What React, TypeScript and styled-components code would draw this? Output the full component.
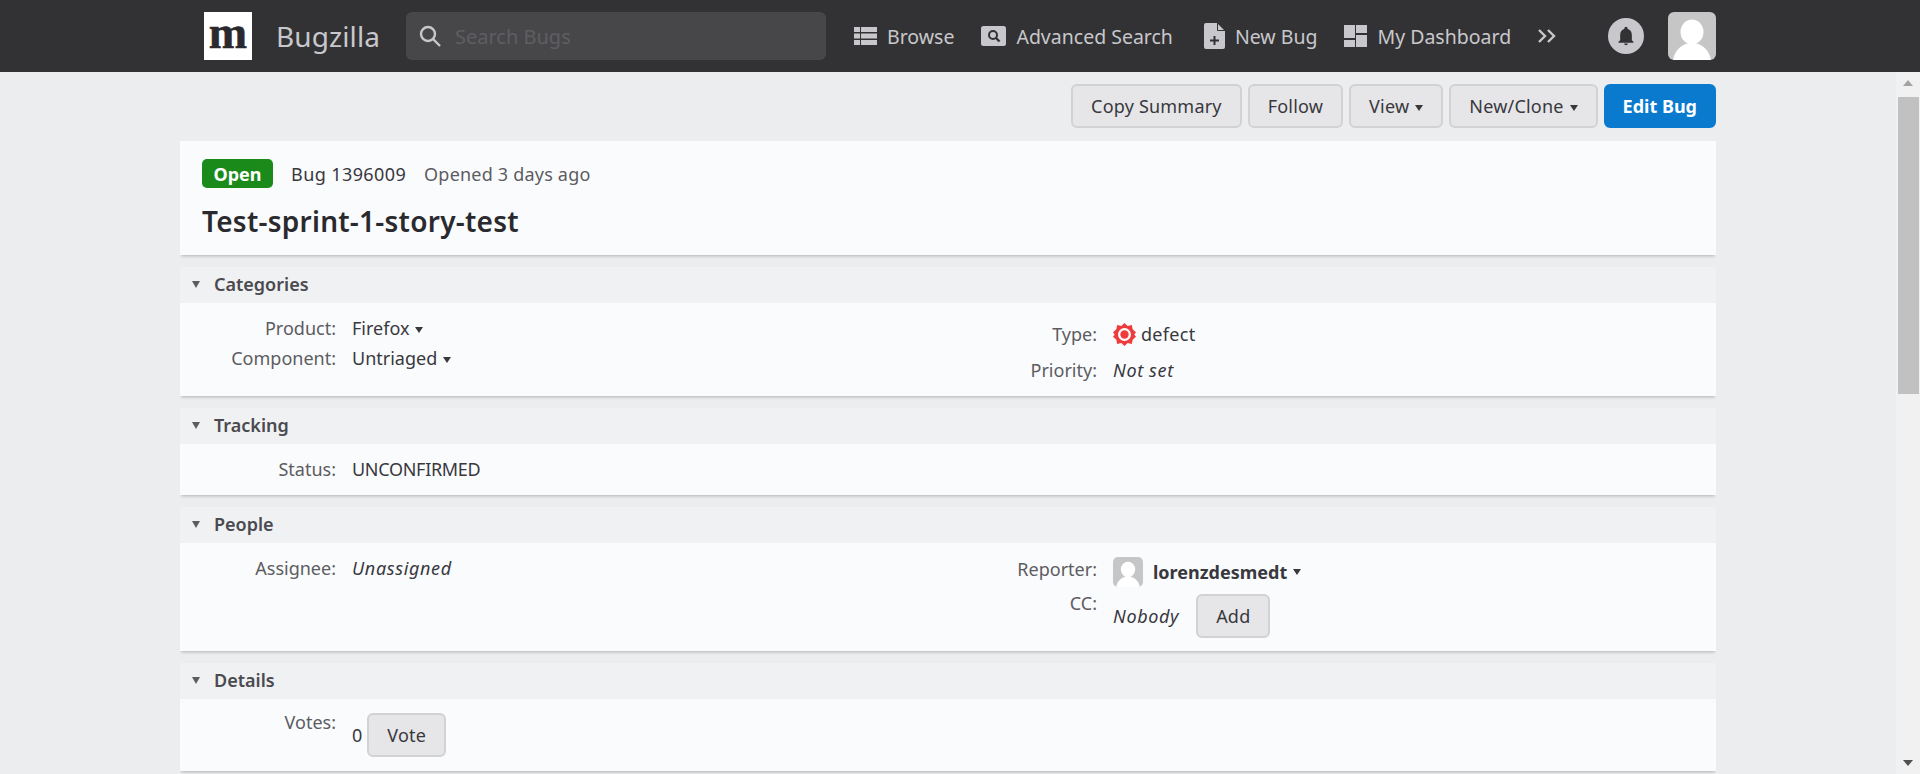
import React from "react";
import styled, { createGlobalStyle } from "styled-components";

const GlobalStyle = createGlobalStyle`
  html, body {
    margin: 0;
    height: 100%;
    overflow: hidden;
  }
  body {
    font-family: "Noto Sans", "Open Sans", sans-serif;
    font-size: 18px;
    color: #38383d;
    background: #ecedef;
  }
`;

const BrowseIcon = () => (
  <svg width="23" height="18" viewBox="0 0 23 18" fill="#c8c8cc">
    <rect x="0" y="0" width="6" height="5" />
    <rect x="7" y="0" width="16" height="5" />
    <rect x="0" y="6.500" width="6" height="5" />
    <rect x="7" y="6.500" width="16" height="5" />
    <rect x="0" y="13" width="6" height="5" />
    <rect x="7" y="13" width="16" height="5" />
  </svg>
);

const AdvancedSearchIcon = () => (
  <svg width="25" height="20" viewBox="0 0 25 20">
    <rect x="0" y="0" width="25" height="20" rx="2.500" fill="#c8c8cc" />
    <circle cx="12" cy="9" r="4" fill="none" stroke="#323234" strokeWidth="2" />
    <path d="M15 12l3.500 3.500" stroke="#323234" strokeWidth="2.400" />
  </svg>
);

const NewBugIcon = () => (
  <svg width="21" height="26" viewBox="0 0 21 26">
    <path d="M2 0h11l8 8v16a2 2 0 0 1-2 2H2a2 2 0 0 1-2-2V2a2 2 0 0 1 2-2z" fill="#c8c8cc" />
    <path d="M13.500 0v7.500H21" fill="none" stroke="#323234" strokeWidth="1" />
    <path d="M10.500 13v9M6 17.500h9" stroke="#323234" strokeWidth="2" />
  </svg>
);

const DashboardIcon = () => (
  <svg width="23" height="22" viewBox="0 0 23 22" fill="#c8c8cc">
    <rect x="0" y="0" width="11" height="13" />
    <rect x="12" y="0" width="11" height="8" />
    <rect x="0" y="15" width="11" height="7" />
    <rect x="12" y="10" width="11" height="12" />
  </svg>
);

const ChevronsIcon = () => (
  <svg width="19" height="14" viewBox="0 0 19 14" fill="none" stroke="#c8c8cc" strokeWidth="2.400">
    <path d="M1 1l6 6-6 6" />
    <path d="M10 1l6 6-6 6" />
  </svg>
);

const SearchIcon = () => (
  <svg width="24" height="24" viewBox="0 0 24 24" fill="none" stroke="#c8c8cc" strokeWidth="2.400">
    <circle cx="10" cy="10" r="7" />
    <path d="M15 15l7 7" />
  </svg>
);

const BellIcon = () => (
  <svg width="20" height="20" viewBox="0 0 24 24" fill="#323234">
    <path d="M12 23a2.500 2.500 0 0 0 2.400-2h-4.800a2.500 2.500 0 0 0 2.400 2zm7-6v-6.500c0-3.300-1.900-6-5-6.800V3a2 2 0 0 0-4 0v.7c-3.100.8-5 3.500-5 6.800V17l-2 2v1h18v-1z" />
  </svg>
);

const PersonIcon = () => (
  <svg width="100%" height="100%" viewBox="0 0 48 48">
    <rect width="48" height="48" fill="#c6c6c6" />
    <ellipse cx="24" cy="20" rx="11.500" ry="12.500" fill="#fff" />
    <path d="M5 48c2-11 10-17 19-17s17 6 19 17z" fill="#fff" />
  </svg>
);

const DefectIcon = () => (
  <svg width="23" height="23" viewBox="0 0 22 22">
    <path
      d="M11 0l3 2.800 4-.8.8 4L22 8.800 20.400 11 22 13.200l-3.200 2.800-.8 4-4-.8L11 22l-3-2.800-4 .8-.8-4L0 13.200 1.600 11 0 8.800 3.200 6l.8-4 4 .8z"
      fill="#ee3b3b"
    />
    <circle cx="11" cy="11" r="6.200" fill="#fff" />
    <circle cx="11" cy="11" r="4" fill="#ee3b3b" />
  </svg>
);

export default function App() {
  return (
    <>
      <GlobalStyle />
      <StyledPage>
        <StyledHeader>
          <StyledHeaderInner>
            <StyledLogo>m</StyledLogo>
            <StyledAppName>Bugzilla</StyledAppName>
            <StyledSearch>
              <SearchIcon />
              <StyledPlaceholder>Search Bugs</StyledPlaceholder>
            </StyledSearch>
            <StyledNav>
              <StyledNavLink $left={28}>
                <BrowseIcon />
                Browse
              </StyledNavLink>
              <StyledNavLink $left={27}>
                <AdvancedSearchIcon />
                Advanced Search
              </StyledNavLink>
              <StyledNavLink $left={31}>
                <NewBugIcon />
                New Bug
              </StyledNavLink>
              <StyledNavLink $left={27}>
                <DashboardIcon />
                My Dashboard
              </StyledNavLink>
              <StyledNavLink $left={27}>
                <ChevronsIcon />
              </StyledNavLink>
            </StyledNav>
            <StyledBell>
              <BellIcon />
            </StyledBell>
            <StyledAvatar>
              <PersonIcon />
            </StyledAvatar>
          </StyledHeaderInner>
        </StyledHeader>

        <StyledBody>
          <StyledMain>
            <StyledActions>
              <StyledButton>Copy Summary</StyledButton>
              <StyledButton>Follow</StyledButton>
              <StyledButton>
                View
                <StyledCaret />
              </StyledButton>
              <StyledButton>
                New/Clone
                <StyledCaret />
              </StyledButton>
              <StyledPrimaryButton>Edit Bug</StyledPrimaryButton>
            </StyledActions>

            <StyledSummaryCard>
              <StyledSummaryMeta>
                <StyledBadge>Open</StyledBadge>
                <StyledBugId>Bug 1396009</StyledBugId>
                <StyledMuted>Opened 3 days ago</StyledMuted>
              </StyledSummaryMeta>
              <StyledTitle>Test-sprint-1-story-test</StyledTitle>
            </StyledSummaryCard>

            <StyledPanel>
              <StyledPanelHeader>
                <StyledToggle />
                Categories
              </StyledPanelHeader>
              <StyledPanelBody $height={93}>
                <StyledColumn>
                  <StyledRow $height={30}>
                    <StyledLabel>Product:</StyledLabel>
                    <span>
                      Firefox
                      <StyledCaret />
                    </span>
                  </StyledRow>
                  <StyledRow $height={30}>
                    <StyledLabel>Component:</StyledLabel>
                    <span>
                      Untriaged
                      <StyledCaret />
                    </span>
                  </StyledRow>
                </StyledColumn>
                <StyledRightColumn>
                  <StyledRow $height={36}>
                    <StyledLabel>Type:</StyledLabel>
                    <StyledIconValue $gap={5}>
                      <DefectIcon />
                      <StyledDefect>defect</StyledDefect>
                    </StyledIconValue>
                  </StyledRow>
                  <StyledRow $height={36}>
                    <StyledLabel>Priority:</StyledLabel>
                    <StyledEmpty>Not set</StyledEmpty>
                  </StyledRow>
                </StyledRightColumn>
              </StyledPanelBody>
            </StyledPanel>

            <StyledPanel>
              <StyledPanelHeader>
                <StyledToggle />
                Tracking
              </StyledPanelHeader>
              <StyledPanelBody $height={51}>
                <StyledColumn>
                  <StyledRow $height={30}>
                    <StyledLabel>Status:</StyledLabel>
                    <StyledStatus>UNCONFIRMED</StyledStatus>
                  </StyledRow>
                </StyledColumn>
              </StyledPanelBody>
            </StyledPanel>

            <StyledPanel>
              <StyledPanelHeader>
                <StyledToggle />
                People
              </StyledPanelHeader>
              <StyledPanelBody $height={108}>
                <StyledColumn>
                  <StyledRow $height={30}>
                    <StyledLabel>Assignee:</StyledLabel>
                    <StyledEmpty>Unassigned</StyledEmpty>
                  </StyledRow>
                </StyledColumn>
                <StyledColumn>
                  <StyledRow $height={37}>
                    <StyledRaisedLabel>Reporter:</StyledRaisedLabel>
                    <StyledIconValue $gap={10}>
                      <StyledUserPic>
                        <PersonIcon />
                      </StyledUserPic>
                      <strong>lorenzdesmedt</strong>
                      <StyledTightCaret />
                    </StyledIconValue>
                  </StyledRow>
                  <StyledTopRow>
                    <StyledLabel>CC:</StyledLabel>
                    <StyledIconValue $gap={17}>
                      <StyledEmpty>Nobody</StyledEmpty>
                      <StyledButton>Add</StyledButton>
                    </StyledIconValue>
                  </StyledTopRow>
                </StyledColumn>
              </StyledPanelBody>
            </StyledPanel>

            <StyledPanel>
              <StyledPanelHeader>
                <StyledToggle />
                Details
              </StyledPanelHeader>
              <StyledPanelBody $height={72}>
                <StyledColumn>
                  <StyledTopRow>
                    <StyledLabel>Votes:</StyledLabel>
                    <StyledIconValue $gap={5}>
                      0<StyledButton>Vote</StyledButton>
                    </StyledIconValue>
                  </StyledTopRow>
                </StyledColumn>
              </StyledPanelBody>
            </StyledPanel>
          </StyledMain>

          <StyledScrollbar>
            <StyledArrowUp />
            <StyledThumb />
            <StyledArrowDown />
          </StyledScrollbar>
        </StyledBody>
      </StyledPage>
    </>
  );
}

const StyledPage = styled.div`
  height: 774px;
  display: flex;
  flex-direction: column;
  overflow: hidden;
`;

const StyledHeader = styled.header`
  height: 72px;
  flex: none;
  background: #323234;
`;

const StyledHeaderInner = styled.div`
  width: 1512px;
  height: 100%;
  margin-left: 204px;
  display: flex;
  align-items: center;
`;

const StyledLogo = styled.div`
  width: 48px;
  height: 48px;
  padding-bottom: 6px;
  box-sizing: border-box;
  background: #fff;
  display: flex;
  align-items: center;
  justify-content: center;
  font-family: "Liberation Serif", serif;
  font-weight: 700;
  font-size: 46px;
  line-height: 42px;
  color: #2a2a2e;
  -webkit-text-stroke: 0.6px #2a2a2e;
`;

const StyledAppName = styled.div`
  margin-left: 24px;
  width: 130px;
  font-size: 28px;
  letter-spacing: 0.1px;
  color: #c8c8cc;
`;

const StyledSearch = styled.div`
  width: 420px;
  height: 48px;
  padding-left: 12px;
  box-sizing: border-box;
  display: flex;
  align-items: center;
  gap: 13px;
  border-radius: 6px;
  background: #47474a;
`;

const StyledPlaceholder = styled.span`
  font-size: 20px;
  color: #5e5e62;
`;

const StyledNav = styled.nav`
  display: flex;
  align-items: center;
`;

const StyledNavLink = styled.div<{ $left: number }>`
  margin-left: ${(props) => props.$left}px;
  display: flex;
  align-items: center;
  gap: 10px;
  font-size: 19.500px;
  color: #c8c8cc;
  white-space: nowrap;
`;

const StyledBell = styled.div`
  width: 36px;
  height: 36px;
  margin-left: auto;
  border-radius: 50%;
  background: #c8c8cc;
  display: flex;
  align-items: center;
  justify-content: center;
`;

const StyledAvatar = styled.div`
  width: 48px;
  height: 48px;
  margin-left: 24px;
  border-radius: 6px;
  overflow: hidden;
`;

const StyledBody = styled.div`
  flex: 1;
  min-height: 0;
  display: flex;
  justify-content: space-between;
`;

const StyledMain = styled.main`
  width: 1536px;
  margin-left: 180px;
  padding-top: 12px;
  overflow: hidden;
`;

const StyledActions = styled.div`
  display: flex;
  justify-content: flex-end;
  gap: 6px;
  margin-bottom: 13px;
`;

const StyledButton = styled.button`
  height: 44px;
  padding: 0 18px;
  box-sizing: border-box;
  font: inherit;
  font-size: 18px;
  letter-spacing: 0.2px;
  color: #38383d;
  white-space: nowrap;
  background: #e6e6e8;
  border: 2px solid #d2d2d5;
  border-radius: 6px;
`;

const StyledPrimaryButton = styled(StyledButton)`
  padding: 0 17px;
  font-weight: 700;
  letter-spacing: 0;
  color: #fff;
  background: #0a7acf;
  border-color: #0a7acf;
`;

const StyledCaret = styled.span`
  display: inline-block;
  width: 0;
  height: 0;
  margin-left: 6px;
  vertical-align: 2px;
  border-left: 4px solid transparent;
  border-right: 4px solid transparent;
  border-top: 6px solid #38383d;
`;

const StyledTightCaret = styled(StyledCaret)`
  margin-left: -4px;
`;

const StyledSummaryCard = styled.section`
  height: 114px;
  padding: 18px 22px 0;
  box-sizing: border-box;
  background: #fafbfd;
  box-shadow: 0 2px 3px -1px rgba(12, 12, 13, 0.25);
`;

const StyledSummaryMeta = styled.div`
  display: flex;
  align-items: center;
  gap: 18px;
`;

const StyledBadge = styled.span`
  height: 29px;
  padding: 0 11.500px;
  display: flex;
  align-items: center;
  font-weight: 700;
  color: #fff;
  background: #1a8a1a;
  border-radius: 5px;
`;

const StyledBugId = styled.span`
  letter-spacing: 0.4px;
`;

const StyledMuted = styled.span`
  letter-spacing: 0.2px;
  color: #5c5c61;
`;

const StyledTitle = styled.h1`
  margin: 15px 0 0;
  font-size: 28px;
  line-height: 36px;
  font-weight: 600;
  letter-spacing: 0.25px;
  color: #2a2a2e;
`;

const StyledPanel = styled.section`
  margin-top: 12px;
  background: #fafbfd;
  box-shadow: 0 2px 3px -1px rgba(12, 12, 13, 0.25);
`;

const StyledPanelHeader = styled.h2`
  height: 36px;
  margin: 0;
  padding: 0 0 2px 12px;
  box-sizing: border-box;
  display: flex;
  align-items: center;
  gap: 14px;
  font-size: 18px;
  font-weight: 600;
  color: #4a4a4f;
  background: #f0f1f3;
`;

const StyledToggle = styled.span`
  width: 0;
  height: 0;
  border-left: 4.500px solid transparent;
  border-right: 4.500px solid transparent;
  border-top: 7px solid #5c5c61;
`;

const StyledPanelBody = styled.div<{ $height: number }>`
  height: ${(props) => props.$height}px;
  padding-top: 10px;
  box-sizing: border-box;
  display: grid;
  grid-template-columns: 761px 1fr;
`;

const StyledColumn = styled.div`
  display: flex;
  flex-direction: column;
`;

const StyledRightColumn = styled(StyledColumn)`
  padding-top: 3px;
`;

const StyledRow = styled.div<{ $height: number }>`
  min-height: ${(props) => props.$height}px;
  display: flex;
  align-items: center;
  gap: 16px;
`;

const StyledTopRow = styled.div`
  display: flex;
  align-items: flex-start;
  gap: 16px;
`;

const StyledLabel = styled.span`
  width: 156px;
  flex: none;
  line-height: 27px;
  text-align: right;
  color: #5c5c61;
`;

const StyledRaisedLabel = styled(StyledLabel)`
  margin-bottom: 4px;
`;

const StyledIconValue = styled.span<{ $gap: number }>`
  display: flex;
  align-items: center;
  gap: ${(props) => props.$gap}px;

  ${StyledTopRow} > & {
    margin-top: 4px;
  }
`;

const StyledDefect = styled.span`
  letter-spacing: 0.3px;
`;

const StyledEmpty = styled.span`
  font-style: italic;
  letter-spacing: 0.65px;
`;

const StyledStatus = styled.span`
  letter-spacing: -0.3px;
`;

const StyledUserPic = styled.span`
  width: 30px;
  height: 30px;
  border-radius: 5px;
  overflow: hidden;
`;

const StyledScrollbar = styled.div`
  width: 24px;
  flex: none;
  display: flex;
  flex-direction: column;
  align-items: center;
  background: #f1f1f1;
`;

const StyledArrowUp = styled.div`
  margin-top: 8px;
  width: 0;
  height: 0;
  border-left: 5.500px solid transparent;
  border-right: 5.500px solid transparent;
  border-bottom: 6px solid #a3a3a3;
`;

const StyledThumb = styled.div`
  width: 21px;
  height: 297px;
  margin-top: 11px;
  background: #c1c1c1;
`;

const StyledArrowDown = styled.div`
  margin-top: auto;
  margin-bottom: 8px;
  width: 0;
  height: 0;
  border-left: 5.500px solid transparent;
  border-right: 5.500px solid transparent;
  border-top: 6px solid #505050;
`;
